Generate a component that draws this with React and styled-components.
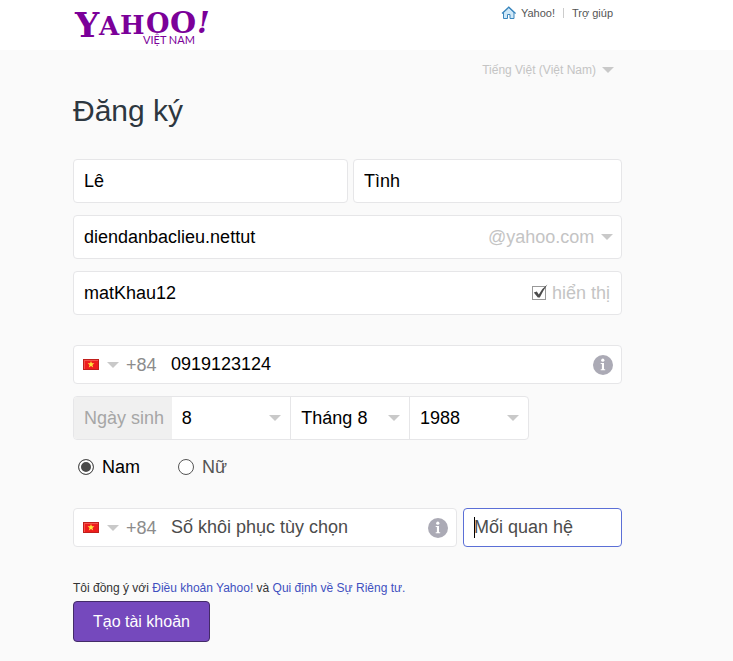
import React, { useState } from "react";
import styled, { createGlobalStyle } from "styled-components";

const months = Array.from({ length: 12 }, (_, i) => `Tháng ${i + 1}`);
const days = Array.from({ length: 31 }, (_, i) => `${i + 1}`);
const years = Array.from({ length: 60 }, (_, i) => `${1950 + i}`);

const Logo = () => (
  <LogoSvg viewBox="0 0 140 36" role="img" aria-label="Yahoo! Việt Nam">
    <text fontFamily="DejaVu Serif, serif" fontWeight="bold">
      <tspan x="2" y="28" fontSize="34">Y</tspan>
      <tspan x="26" y="26" fontSize="26">A</tspan>
      <tspan x="47" y="25" fontSize="26">H</tspan>
      <tspan x="73" y="24" fontSize="27">O</tspan>
      <tspan x="97" y="24" fontSize="30">O</tspan>
      <tspan x="124" y="24" fontSize="29" fontStyle="italic">!</tspan>
    </text>
    <text x="70" y="35" fontFamily="Lato, sans-serif" fontSize="11">
      VIỆT NAM
    </text>
  </LogoSvg>
);

const HomeIcon = () => (
  <svg width="16" height="14" viewBox="0 0 16 14" aria-hidden="true">
    <path
      d="M2.5 6.5V12.5H6.5V8.5H9V12.5H13V6.5L7.8 1.5Z"
      fill="#cfe8f8"
      stroke="#3a86bd"
      strokeWidth="1"
    />
    <path d="M1 7.5L7.8 1L14.6 7.5" fill="none" stroke="#3a86bd" strokeWidth="1.2" />
  </svg>
);

const Arrow = () => (
  <ArrowSvg viewBox="0 0 12 6" aria-hidden="true">
    <path d="M0 0H12L6 6Z" fill="#c9c9c9" />
  </ArrowSvg>
);

const Flag = () => (
  <svg width="16" height="11" viewBox="0 0 16 11" aria-hidden="true">
    <rect width="16" height="11" fill="#c01f1c" />
    <rect x="1" y="1" width="14" height="9" fill="#f5524a" />
    <rect x="2" y="2" width="13" height="8" fill="#ee1c1c" />
    <path
      d="M8 2L8.9 4.3H11.4L9.4 6L10.2 8.6L8 7.1L5.8 8.6L6.6 6L4.6 4.3H7.1Z"
      fill="#ffe53b"
    />
  </svg>
);

const InfoIcon = () => (
  <svg width="20" height="20" viewBox="0 0 20 20" aria-hidden="true">
    <circle cx="10" cy="10" r="10" fill="#abaab5" />
    <circle cx="9.8" cy="5.2" r="1.6" fill="#fff" />
    <path d="M7.7 8H11V14.2H12.2V15.3H7.7V14.2H8.9V9.1H7.7Z" fill="#fff" />
  </svg>
);

const CountryCode = ({ label }) => (
  <CountryWrapper>
    <CountryMark>
      <Flag />
      <Arrow />
    </CountryMark>
    <CountrySelect aria-label={label} defaultValue="+84">
      <option>+84</option>
    </CountrySelect>
  </CountryWrapper>
);

const DateSelect = ({ label, options, initial }) => (
  <DatePart>
    <PlainSelect aria-label={label} defaultValue={initial}>
      {options.map((option) => (
        <option key={option}>{option}</option>
      ))}
    </PlainSelect>
    <SelectMark>
      <Arrow />
    </SelectMark>
  </DatePart>
);

const App = () => {
  const [visible, setVisible] = useState(true);
  const [gender, setGender] = useState("male");

  return (
    <>
      <GlobalStyle />
      <Header>
        <HomeLink href="#home">
          <Logo />
        </HomeLink>
        <TopNav>
          <TopLink href="#yahoo">
            <HomeIcon />
            Yahoo!
          </TopLink>
          <Divider />
          <TopLink href="#help">Trợ giúp</TopLink>
        </TopNav>
      </Header>
      <Main>
        <LanguageRow>
          <LanguageButton type="button">
            Tiếng Việt (Việt Nam)
            <Arrow />
          </LanguageButton>
        </LanguageRow>
        <Title>Đăng ký</Title>
        <form onSubmit={(e) => e.preventDefault()}>
          <NameRow>
            <Field>
              <Input aria-label="Họ" defaultValue="Lê" />
            </Field>
            <Field>
              <Input aria-label="Tên" defaultValue="Tình" />
            </Field>
          </NameRow>
          <Field $spaced>
            <Input aria-label="Tên người dùng" defaultValue="diendanbaclieu.nettut" />
            <DomainWrapper>
              <DomainSelect aria-label="Tên miền" defaultValue="@yahoo.com">
                <option>@yahoo.com</option>
              </DomainSelect>
              <SelectMark $flush>
                <Arrow />
              </SelectMark>
            </DomainWrapper>
          </Field>
          <Field $spaced>
            <Input
              aria-label="Mật khẩu"
              type={visible ? "text" : "password"}
              defaultValue="matKhau12"
            />
            <ShowLabel>
              <CheckWrapper>
                <Checkbox
                  type="checkbox"
                  checked={visible}
                  onChange={() => setVisible(!visible)}
                />
                {visible && (
                  <CheckMark viewBox="0 0 16 16" aria-hidden="true">
                    <path
                      d="M1.8 8.6L4.8 7.6L6.8 10.4Q10 4.4 15.4 0.6Q11.2 6.6 7.8 13.6H5.8Z"
                      fill="#4c4c4c"
                    />
                  </CheckMark>
                )}
              </CheckWrapper>
              hiển thị
            </ShowLabel>
          </Field>
          <PhoneSection>
            <Field $compact>
              <CountryCode label="Mã quốc gia" />
              <Input aria-label="Số di động" type="tel" defaultValue="0919123124" />
              <InfoButton type="button" aria-label="Thông tin số di động">
                <InfoIcon />
              </InfoButton>
            </Field>
          </PhoneSection>
          <BirthRow role="group" aria-labelledby="birth-label">
            <BirthLabel id="birth-label">Ngày sinh</BirthLabel>
            <DateSelect label="Ngày" options={days} initial="8" />
            <DateSelect label="Tháng" options={months} initial="Tháng 8" />
            <DateSelect label="Năm" options={years} initial="1988" />
          </BirthRow>
          <GenderRow>
            <RadioLabel $active={gender === "male"}>
              <Radio
                type="radio"
                name="gender"
                checked={gender === "male"}
                onChange={() => setGender("male")}
              />
              Nam
            </RadioLabel>
            <RadioLabel $active={gender === "female"}>
              <Radio
                type="radio"
                name="gender"
                checked={gender === "female"}
                onChange={() => setGender("female")}
              />
              Nữ
            </RadioLabel>
          </GenderRow>
          <RecoveryRow>
            <Field $compact>
              <CountryCode label="Mã quốc gia khôi phục" />
              <Input
                aria-label="Số khôi phục tùy chọn"
                type="tel"
                placeholder="Số khôi phục tùy chọn"
              />
              <InfoButton type="button" aria-label="Thông tin số khôi phục">
                <InfoIcon />
              </InfoButton>
            </Field>
            <Field $compact $focused>
              <TextCaret />
              <Input aria-label="Mối quan hệ" placeholder="Mối quan hệ" />
            </Field>
          </RecoveryRow>
          <Terms>
            Tôi đồng ý với <a href="#terms">Điều khoản Yahoo!</a> và{" "}
            <a href="#privacy">Qui định về Sự Riêng tư.</a>
          </Terms>
          <SubmitButton type="submit">Tạo tài khoản</SubmitButton>
        </form>
      </Main>
    </>
  );
};

export default App;

const GlobalStyle = createGlobalStyle`
  * {
    box-sizing: border-box;
  }

  body {
    margin: 0;
    background: #fafafa;
    color: #000;
    font-family: "Liberation Sans", Arial, sans-serif;
    font-size: 18px;
  }

  input,
  select,
  button {
    margin: 0;
    font-family: inherit;
    font-size: inherit;
  }
`;

const Header = styled.header`
  display: flex;
  justify-content: space-between;
  align-items: flex-start;
  height: 50px;
  padding: 0 120px 0 73px;
  background: #fff;
`;

const HomeLink = styled.a`
  padding-top: 9px;
`;

const LogoSvg = styled.svg`
  display: block;
  width: 140px;
  height: 36px;
  overflow: visible;
  fill: #7b0099;
`;

const TopNav = styled.nav`
  display: flex;
  align-items: center;
  gap: 8px;
  padding-top: 5px;
`;

const TopLink = styled.a`
  display: flex;
  align-items: center;
  gap: 4px;
  color: #555;
  font-size: 11px;
  line-height: 16px;
  text-decoration: none;
`;

const Divider = styled.span`
  width: 1px;
  height: 10px;
  background: #ccc;
`;

const Main = styled.main`
  padding: 12px 111px 16px 73px;
`;

const LanguageRow = styled.div`
  display: flex;
  justify-content: flex-end;
  padding-right: 8px;
`;

const LanguageButton = styled.button`
  display: flex;
  align-items: center;
  gap: 6px;
  padding: 0;
  border: none;
  background: none;
  color: #c4c4c4;
  font-size: 12px;
  line-height: 16px;
`;

const ArrowSvg = styled.svg`
  flex: none;
  width: 12px;
  height: 6px;
`;

const Title = styled.h1`
  margin: 14px 0 30px;
  color: #2d3740;
  font-size: 30px;
  font-weight: normal;
  line-height: 37px;
`;

const Field = styled.div`
  position: relative;
  display: flex;
  align-items: center;
  min-width: 0;
  height: ${({ $compact }) => ($compact ? "39px" : "44px")};
  margin-top: ${({ $spaced }) => ($spaced ? "12px" : "0")};
  padding: 0 8px 0 0;
  border: 1px solid ${({ $focused }) => ($focused ? "#5b6fd6" : "#e6e6e8")};
  border-radius: 4px;
  background: #fff;
`;

const Input = styled.input`
  flex: 1;
  min-width: 0;
  height: 100%;
  padding: 0 0 0 10px;
  border: none;
  outline: none;
  background: transparent;
  color: #000;

  &::placeholder {
    color: #4c4c4c;
    opacity: 1;
  }
`;

const NameRow = styled.div`
  display: grid;
  grid-template-columns: 275fr 269fr;
  gap: 5px;
`;

const PlainSelect = styled.select`
  width: 100%;
  height: 100%;
  padding: 0 28px 0 10px;
  border: none;
  outline: none;
  appearance: none;
  background: transparent;
  color: #000;
`;

const SelectMark = styled.span`
  position: absolute;
  top: 0;
  bottom: 0;
  right: ${({ $flush }) => ($flush ? "0" : "9px")};
  display: flex;
  align-items: center;
  pointer-events: none;
`;

const DomainWrapper = styled.div`
  position: relative;
  height: 100%;
`;

const DomainSelect = styled(PlainSelect)`
  padding: 0 18px 0 0;
  color: #c4c4c4;
`;

const ShowLabel = styled.label`
  display: flex;
  align-items: center;
  gap: 6px;
  padding-right: 3px;
  color: #c4c4c4;
`;

const CheckWrapper = styled.span`
  position: relative;
  display: flex;
`;

const Checkbox = styled.input`
  width: 14px;
  height: 14px;
  border: 1px solid #999;
  appearance: none;
  background: #fff;
`;

const CheckMark = styled.svg`
  position: absolute;
  top: -2px;
  left: 0;
  width: 16px;
  height: 16px;
  pointer-events: none;
`;

const PhoneSection = styled.div`
  padding-top: 30px;
`;

const CountryWrapper = styled.div`
  position: relative;
  height: 100%;
  margin-left: 9px;
`;

const CountryMark = styled.span`
  position: absolute;
  top: 0;
  bottom: 0;
  left: 0;
  display: flex;
  align-items: center;
  gap: 8px;
  pointer-events: none;
`;

const CountrySelect = styled(PlainSelect)`
  width: 78px;
  padding: 0 0 0 43px;
  color: #8c8c8c;
`;

const InfoButton = styled.button`
  display: flex;
  padding: 0;
  border: none;
  background: none;
`;

const BirthRow = styled.div`
  display: grid;
  grid-template-columns: 98fr 119fr 119fr 119fr;
  width: 83%;
  height: 44px;
  margin-top: 12px;
  border: 1px solid #e6e6e8;
  border-radius: 4px;
  background: #fff;
  overflow: hidden;
`;

const BirthLabel = styled.span`
  padding-left: 10px;
  background: #f0f0f0;
  color: #a6a6a6;
  line-height: 42px;
  white-space: nowrap;
`;

const DatePart = styled.div`
  position: relative;
  min-width: 0;

  & + & {
    border-left: 1px solid #e6e6e8;
  }
`;

const GenderRow = styled.div`
  display: flex;
  gap: 38px;
  padding: 16px 0 0 5px;
`;

const RadioLabel = styled.label`
  display: flex;
  align-items: center;
  gap: 8px;
  color: ${({ $active }) => ($active ? "#000" : "#555")};
  line-height: 22px;
`;

const Radio = styled.input`
  width: 16px;
  height: 16px;
  border: 1px solid #555;
  border-radius: 50%;
  appearance: none;
  background: #fff;

  &:checked {
    background: #4a4a4a;
    box-shadow: inset 0 0 0 2px #fff;
  }
`;

const RecoveryRow = styled.div`
  display: grid;
  grid-template-columns: 384fr 159fr;
  gap: 6px;
  margin-top: 30px;
`;

const TextCaret = styled.span`
  position: absolute;
  top: 8px;
  left: 10px;
  width: 1px;
  height: 21px;
  background: #000;
`;

const Terms = styled.p`
  margin: 32px 0 4px;
  color: #333;
  font-size: 12px;
  line-height: 18px;

  a {
    color: #4050c0;
    text-decoration: none;
  }
`;

const SubmitButton = styled.button`
  height: 41px;
  padding: 0 19px;
  border: 1px solid #432b68;
  border-radius: 4px;
  background: #7549bd;
  color: #fff;
  font-size: 16px;
`;
